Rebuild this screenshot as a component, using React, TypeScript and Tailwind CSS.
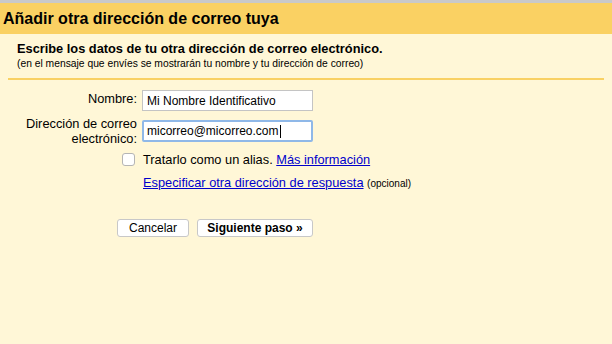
export default function App() {
  return (
    <div className="w-[612px] h-[344px] overflow-hidden bg-[#fff7d7] font-['Liberation_Sans',Arial,sans-serif] text-black">
      <div className="h-[3px] bg-[#c9c9c9]" />
      <div className="h-[31px] bg-[#fad163] flex items-center pl-[3px]">
        <h1 className="text-[16px] font-bold leading-none">Añadir otra dirección de correo tuya</h1>
      </div>
      <div className="pl-[17px] pt-[7px]">
        <p className="text-[12.8px] font-bold leading-[16px]">Escribe los datos de tu otra dirección de correo electrónico.</p>
        <p className="text-[10.3px] leading-[12px] mt-[1px]">(en el mensaje que envíes se mostrarán tu nombre y tu dirección de correo)</p>
      </div>
      <div className="ml-[8px] mr-[8px] mt-[8px] h-[2px] bg-[#f9d163]" />

      <div className="mt-[10px] grid grid-cols-[137px_1fr] gap-x-[5px] text-[12.8px] leading-[15px]">
        <label className="text-right pt-[1px]">Nombre:</label>
        <input
          defaultValue="Mi Nombre Identificativo"
          className="w-[171px] h-[21px] bg-white border border-[#c4c4c4] px-[4px] text-[12px] outline-none"
        />

        <label className="text-right mt-[5px]">
          Dirección de correo
          <br />
          electrónico:
        </label>
        <div className="mt-[9px]">
          <div className="w-[171px] h-[22px] bg-white border-2 border-[#8fb8e8] rounded-[2px] px-[3px] text-[12px] flex items-center">
            micorreo@micorreo.com
            <span className="inline-block w-px h-[13px] bg-black ml-[1px]" />
          </div>
        </div>

        <div className="flex justify-end items-start pr-[2px] mt-[7px]">
          <span className="w-[13px] h-[13px] bg-white border border-[#b5b5b5] rounded-[3px]" />
        </div>
        <div className="mt-[6px] pl-[1px]">
          Tratarlo como un alias.{' '}
          <a className="text-[#0000cc] underline">Más información</a>
        </div>

        <div />
        <div className="mt-[8px] pl-[1px]">
          <a className="text-[#0000cc] underline">Especificar otra dirección de respuesta</a>{' '}
          <span className="text-[10px]">(opcional)</span>
        </div>
      </div>

      <div className="ml-[117px] mt-[28px] flex gap-[8px]">
        <button className="w-[72px] h-[18px] bg-white border border-[#c8c8c8] rounded-[3px] text-[12px] leading-none">
          Cancelar
        </button>
        <button className="w-[116px] h-[18px] bg-white border border-[#c8c8c8] rounded-[3px] text-[12px] font-bold leading-none">
          Siguiente paso »
        </button>
      </div>
    </div>
  )
}
